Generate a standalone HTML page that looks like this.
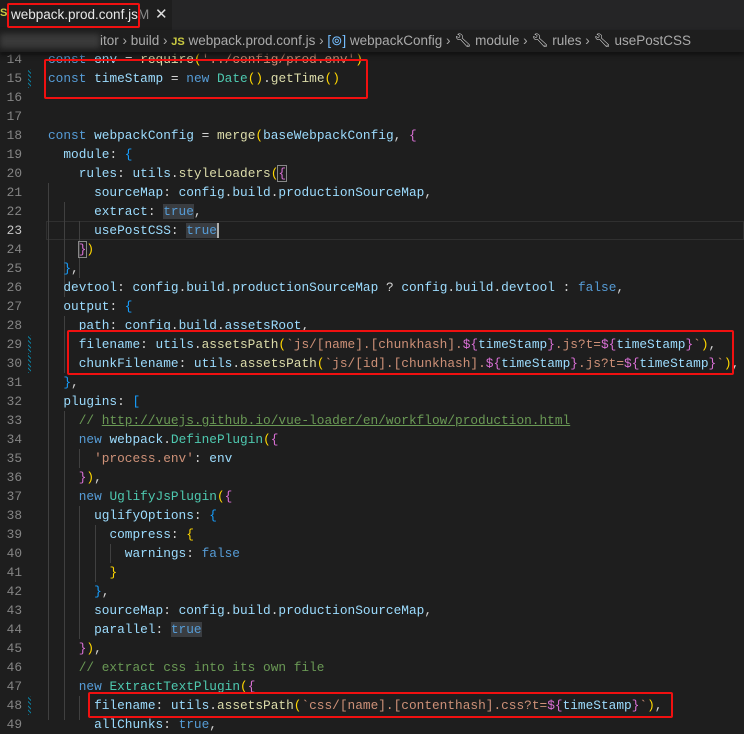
<!DOCTYPE html>
<html><head><meta charset="utf-8"><style>
*{margin:0;padding:0;box-sizing:border-box}
body{width:744px;height:720px;overflow:hidden;background:#1e1e1e;position:relative;font-family:"Liberation Mono",monospace}
.tabs{position:absolute;left:0;top:0;width:744px;height:30px;background:#252526}
.tab{position:absolute;left:0;top:0;width:172px;height:30px;background:#1e1e1e;font-family:"Liberation Sans",sans-serif;font-size:13.5px;color:#e8e8e8}
.bc{position:absolute;left:0;top:30px;width:744px;height:22px;background:#1e1e1e;box-shadow:0 3px 4px #111;z-index:5;font-family:"Liberation Sans",sans-serif;font-size:13.5px;color:#aaa;line-height:22px;white-space:nowrap}
.ln{position:absolute;left:0;width:22px;text-align:right;color:#858585;font-size:12.8px;height:19px;line-height:19px}
.c{position:absolute;left:48px;height:19px;line-height:19px;font-size:12.8px;color:#d4d4d4;white-space:pre}
.k{color:#569cd6}.v{color:#9cdcfe}.f{color:#dcdcaa}.t{color:#4ec9b0}.s{color:#ce9178}.m{color:#6a9955}
.g{color:#ffd700}.p{color:#da70d6}.b{color:#179fff}
.sel{background:#3a3d41}
.gd{position:absolute;width:1px;background:#404040}
.mod{position:absolute;left:28px;width:3px;height:19px;background:repeating-linear-gradient(45deg,#0c7d9d 0 1px,#1e1e1e 1px 3px)}
.box{position:absolute;border:2px solid #f01010;border-radius:2px;z-index:10}
</style></head><body>
<div class="tabs"><div class="tab">
<span style="position:absolute;left:0;top:7px;color:#cbcb41;font-size:11px;font-weight:bold">S</span>
<span style="position:absolute;left:11px;top:7px">webpack.prod.conf.js</span>
<span style="position:absolute;left:138px;top:7px;color:#888">M</span>
<span style="position:absolute;left:155px;top:5px;color:#ddd;font-size:15px">✕</span>
</div></div>
<div class="box" style="left:7px;top:3px;width:133px;height:25px"></div>
<div class="bc"><span style="position:absolute;left:0;top:4px;width:100px;height:14px;background:#3a3a3a;filter:blur(3px)"></span><span style="position:absolute;left:100px">itor › build › <b style="color:#cbcb41;font-size:11px">JS</b> webpack.prod.conf.js › <span style="color:#75beff">[⊚]</span> webpackConfig › <span style="color:#ddd">🔧︎</span> module › <span style="color:#ddd">🔧︎</span> rules › <span style="color:#ddd">🔧︎</span> usePostCSS</span></div>

<div style="position:absolute;left:46px;top:221px;width:698px;height:19px;border:1px solid #303030"></div>

<div class="gd" style="left:48px;top:183px;height:537px"></div>
<div class="gd" style="left:64px;top:202px;height:95px"></div>
<div class="gd" style="left:64px;top:316px;height:57px"></div>
<div class="gd" style="left:64px;top:411px;height:309px"></div>
<div class="gd" style="left:79px;top:221px;height:57px"></div>
<div class="gd" style="left:79px;top:449px;height:19px"></div>
<div class="gd" style="left:79px;top:506px;height:133px"></div>
<div class="gd" style="left:79px;top:696px;height:24px"></div>
<div class="gd" style="left:95px;top:525px;height:57px"></div>
<div class="gd" style="left:110px;top:544px;height:19px"></div>

<div class="mod" style="top:69px"></div><div class="mod" style="top:335px"></div><div class="mod" style="top:354px"></div><div class="mod" style="top:696px"></div>

<div class="ln" style="top:50px">14</div><div class="c" style="top:50px"><span class="k">const</span> <span class="v">env</span> = <span class="f">require</span><span class="g">(</span><span class="s">'../config/prod.env'</span><span class="g">)</span></div>
<div class="ln" style="top:69px">15</div><div class="c" style="top:69px"><span class="k">const</span> <span class="v">timeStamp</span> = <span class="k">new</span> <span class="t">Date</span><span class="g">()</span>.<span class="f">getTime</span><span class="g">()</span></div>
<div class="ln" style="top:88px">16</div>
<div class="ln" style="top:107px">17</div>
<div class="ln" style="top:126px">18</div><div class="c" style="top:126px"><span class="k">const</span> <span class="v">webpackConfig</span> = <span class="f">merge</span><span class="g">(</span><span class="v">baseWebpackConfig</span>, <span class="p">{</span></div>
<div class="ln" style="top:145px">19</div><div class="c" style="top:145px">  <span class="v">module</span>: <span class="b">{</span></div>
<div class="ln" style="top:164px">20</div><div class="c" style="top:164px">    <span class="v">rules</span>: <span class="v">utils</span>.<span class="f">styleLoaders</span><span class="g">(</span><span class="p" style="outline:1px solid #888">{</span></div>
<div class="ln" style="top:183px">21</div><div class="c" style="top:183px">      <span class="v">sourceMap</span>: <span class="v">config</span>.<span class="v">build</span>.<span class="v">productionSourceMap</span>,</div>
<div class="ln" style="top:202px">22</div><div class="c" style="top:202px">      <span class="v">extract</span>: <span class="k sel">true</span>,</div>
<div class="ln" style="top:221px;color:#c6c6c6">23</div><div class="c" style="top:221px">      <span class="v">usePostCSS</span>: <span class="k sel">true</span><span style="border-left:2px solid #aeafad"></span></div>
<div class="ln" style="top:240px">24</div><div class="c" style="top:240px">    <span class="p" style="outline:1px solid #888">}</span><span class="g">)</span></div>
<div class="ln" style="top:259px">25</div><div class="c" style="top:259px">  <span class="b">}</span>,</div>
<div class="ln" style="top:278px">26</div><div class="c" style="top:278px">  <span class="v">devtool</span>: <span class="v">config</span>.<span class="v">build</span>.<span class="v">productionSourceMap</span> ? <span class="v">config</span>.<span class="v">build</span>.<span class="v">devtool</span> : <span class="k">false</span>,</div>
<div class="ln" style="top:297px">27</div><div class="c" style="top:297px">  <span class="v">output</span>: <span class="b">{</span></div>
<div class="ln" style="top:316px">28</div><div class="c" style="top:316px">    <span class="v">path</span>: <span class="v">config</span>.<span class="v">build</span>.<span class="v">assetsRoot</span>,</div>
<div class="ln" style="top:335px">29</div><div class="c" style="top:335px">    <span class="v">filename</span>: <span class="v">utils</span>.<span class="f">assetsPath</span><span class="g">(</span><span class="s">`js/[name].[chunkhash].</span><span class="p">${</span><span class="v">timeStamp</span><span class="p">}</span><span class="s">.js?t=</span><span class="p">${</span><span class="v">timeStamp</span><span class="p">}</span><span class="s">`</span><span class="g">)</span>,</div>
<div class="ln" style="top:354px">30</div><div class="c" style="top:354px">    <span class="v">chunkFilename</span>: <span class="v">utils</span>.<span class="f">assetsPath</span><span class="g">(</span><span class="s">`js/[id].[chunkhash].</span><span class="p">${</span><span class="v">timeStamp</span><span class="p">}</span><span class="s">.js?t=</span><span class="p">${</span><span class="v">timeStamp</span><span class="p">}</span><span class="s">`</span><span class="g">)</span>,</div>
<div class="ln" style="top:373px">31</div><div class="c" style="top:373px">  <span class="b">}</span>,</div>
<div class="ln" style="top:392px">32</div><div class="c" style="top:392px">  <span class="v">plugins</span>: <span class="b">[</span></div>
<div class="ln" style="top:411px">33</div><div class="c" style="top:411px">    <span class="m">// <u>http://vuejs.github.io/vue-loader/en/workflow/production.html</u></span></div>
<div class="ln" style="top:430px">34</div><div class="c" style="top:430px">    <span class="k">new</span> <span class="v">webpack</span>.<span class="t">DefinePlugin</span><span class="g">(</span><span class="p">{</span></div>
<div class="ln" style="top:449px">35</div><div class="c" style="top:449px">      <span class="s">'process.env'</span>: <span class="v">env</span></div>
<div class="ln" style="top:468px">36</div><div class="c" style="top:468px">    <span class="p">}</span><span class="g">)</span>,</div>
<div class="ln" style="top:487px">37</div><div class="c" style="top:487px">    <span class="k">new</span> <span class="t">UglifyJsPlugin</span><span class="g">(</span><span class="p">{</span></div>
<div class="ln" style="top:506px">38</div><div class="c" style="top:506px">      <span class="v">uglifyOptions</span>: <span class="b">{</span></div>
<div class="ln" style="top:525px">39</div><div class="c" style="top:525px">        <span class="v">compress</span>: <span class="g">{</span></div>
<div class="ln" style="top:544px">40</div><div class="c" style="top:544px">          <span class="v">warnings</span>: <span class="k">false</span></div>
<div class="ln" style="top:563px">41</div><div class="c" style="top:563px">        <span class="g">}</span></div>
<div class="ln" style="top:582px">42</div><div class="c" style="top:582px">      <span class="b">}</span>,</div>
<div class="ln" style="top:601px">43</div><div class="c" style="top:601px">      <span class="v">sourceMap</span>: <span class="v">config</span>.<span class="v">build</span>.<span class="v">productionSourceMap</span>,</div>
<div class="ln" style="top:620px">44</div><div class="c" style="top:620px">      <span class="v">parallel</span>: <span class="k sel">true</span></div>
<div class="ln" style="top:639px">45</div><div class="c" style="top:639px">    <span class="p">}</span><span class="g">)</span>,</div>
<div class="ln" style="top:658px">46</div><div class="c" style="top:658px">    <span class="m">// extract css into its own file</span></div>
<div class="ln" style="top:677px">47</div><div class="c" style="top:677px">    <span class="k">new</span> <span class="t">ExtractTextPlugin</span><span class="g">(</span><span class="p">{</span></div>
<div class="ln" style="top:696px">48</div><div class="c" style="top:696px">      <span class="v">filename</span>: <span class="v">utils</span>.<span class="f">assetsPath</span><span class="g">(</span><span class="s">`css/[name].[contenthash].css?t=</span><span class="p">${</span><span class="v">timeStamp</span><span class="p">}</span><span class="s">`</span><span class="g">)</span>,</div>
<div class="ln" style="top:715px">49</div><div class="c" style="top:715px">      <span class="v">allChunks</span>: <span class="k">true</span>,</div>

<div class="box" style="left:44px;top:59px;width:324px;height:40px"></div>
<div class="box" style="left:67px;top:330px;width:667px;height:45px"></div>
<div class="box" style="left:88px;top:692px;width:585px;height:26px"></div>
</body></html>
